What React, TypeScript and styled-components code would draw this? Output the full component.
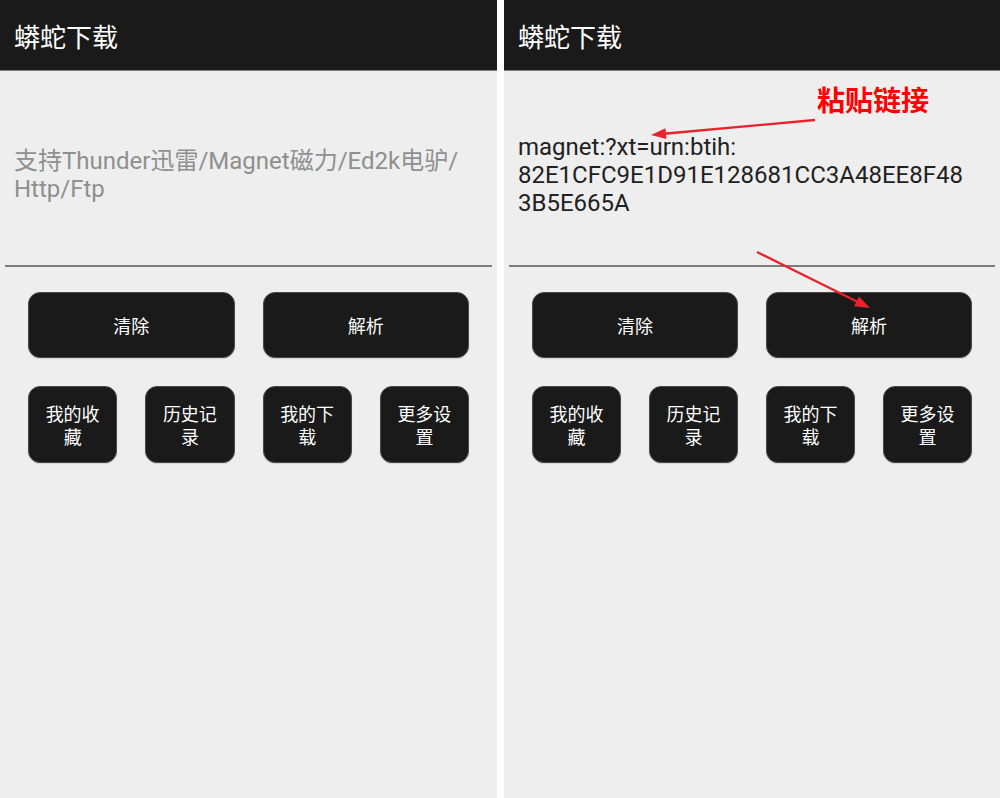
import React from "react";
import styled, { createGlobalStyle } from "styled-components";

const Global = createGlobalStyle`
  html, body { margin: 0; padding: 0; background: #ffffff; }
  * { box-sizing: border-box; }
  body { font-family: Roboto, "Noto Sans CJK SC", sans-serif; }
`;

const Screen = styled.div`
  display: flex;
  gap: 7px;
  width: 1000px;
  height: 798px;
  overflow: hidden;
`;

const Panel = styled.div<{ $w: number }>`
  position: relative;
  width: ${(p) => p.$w}px;
  height: 798px;
  background: #eeeeee;
  display: flex;
  flex-direction: column;
`;

const Header = styled.div`
  height: 71px;
  background: #1a1a1a;
  border-bottom: 1px solid #808080;
  display: flex;
  align-items: center;
  padding: 0 0 0 14px;
  color: #ffffff;
  font-family: "Noto Sans CJK SC", sans-serif;
  font-size: 26px;
`;

const InputArea = styled.div`
  height: 194px;
  padding: 14px 14px 0 14px;
  display: flex;
  flex-direction: column;
  justify-content: center;
`;

const InputText = styled.div<{ $placeholder?: boolean }>`
  font-family: Roboto, "Noto Sans CJK SC", sans-serif;
  font-size: 24px;
  line-height: 28px;
  color: ${(p) => (p.$placeholder ? "#8f8f8f" : "#212121")};
  white-space: nowrap;
`;

const Underline = styled.div`
  height: 2px;
  margin: 0 5px;
  background: #7c7c7c;
`;

const Controls = styled.div`
  padding: 25px 28px 0 28px;
  display: flex;
  flex-direction: column;
  gap: 28px;
`;

const Row = styled.div<{ $cols: number }>`
  display: grid;
  grid-template-columns: repeat(${(p) => p.$cols}, 1fr);
  gap: 28px;
`;

const Button = styled.div<{ $h: number }>`
  height: ${(p) => p.$h}px;
  background: #1a1a1a;
  border-radius: 12px;
  border: 1px solid #4a4a4a;
  box-shadow: 0 1px 1px rgba(0, 0, 0, 0.12);
  color: #ffffff;
  display: flex;
  align-items: center;
  justify-content: center;
  text-align: center;
  padding: 0 10px;
  font-family: "Noto Sans CJK SC", sans-serif;
  font-size: 18px;
  line-height: 23px;
`;

const Note = styled.div`
  position: absolute;
  left: 313px;
  top: 81px;
  color: #ff0000;
  font-family: "Noto Sans CJK SC", sans-serif;
  font-weight: 700;
  font-size: 28px;
  line-height: 36px;
`;

const Overlay = styled.svg`
  position: absolute;
  left: 0;
  top: 0;
  pointer-events: none;
`;

function Arrow({ x1, y1, x2, y2 }: { x1: number; y1: number; x2: number; y2: number }) {
  const dx = x2 - x1;
  const dy = y2 - y1;
  const len = Math.hypot(dx, dy);
  const ux = dx / len;
  const uy = dy / len;
  const hl = 15;
  const hw = 5.5;
  const bx = x2 - ux * hl;
  const by = y2 - uy * hl;
  const px = -uy;
  const py = ux;
  const pts = `${x2},${y2} ${bx + px * hw},${by + py * hw} ${bx - px * hw},${by - py * hw}`;
  return (
    <g>
      <line x1={x1} y1={y1} x2={bx + ux * 2} y2={by + uy * 2} stroke="#e8232b" strokeWidth={2.4} />
      <polygon points={pts} fill="#e8232b" />
    </g>
  );
}

function Buttons() {
  return (
    <Controls>
      <Row $cols={2}>
        <Button $h={66}>清除</Button>
        <Button $h={66}>解析</Button>
      </Row>
      <Row $cols={4}>
        {["我的收藏", "历史记录", "我的下载", "更多设置"].map((t) => (
          <Button key={t} $h={77}>
            {t}
          </Button>
        ))}
      </Row>
    </Controls>
  );
}

export default function App() {
  return (
    <>
      <Global />
      <Screen>
        <Panel $w={497}>
          <Header>蟒蛇下载</Header>
          <InputArea>
            <InputText $placeholder>
              支持Thunder迅雷/Magnet磁力/Ed2k电驴/
              <br />
              Http/Ftp
            </InputText>
          </InputArea>
          <Underline />
          <Buttons />
        </Panel>
        <Panel $w={496}>
          <Header>蟒蛇下载</Header>
          <InputArea>
            <InputText>
              magnet:?xt=urn:btih:
              <br />
              82E1CFC9E1D91E128681CC3A48EE8F48
              <br />
              3B5E665A
            </InputText>
          </InputArea>
          <Underline />
          <Buttons />
          <Note>粘贴链接</Note>
          <Overlay width={496} height={400} viewBox="0 0 496 400">
            <Arrow x1={311} y1={120} x2={147} y2={135} />
            <Arrow x1={253} y1={252} x2={366} y2={308} />
          </Overlay>
        </Panel>
      </Screen>
    </>
  );
}
